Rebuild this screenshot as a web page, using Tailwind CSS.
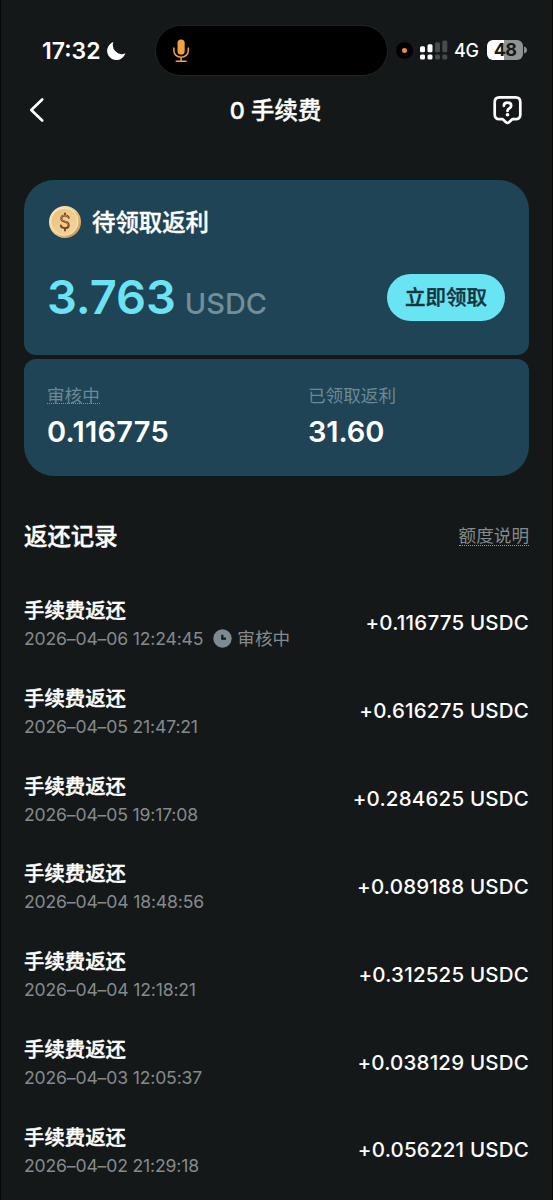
<!DOCTYPE html>
<html lang="zh-CN">
<head>
<meta charset="utf-8">
<meta name="viewport" content="width=device-width, initial-scale=1">
<title>0 手续费</title>
<script src="https://cdn.jsdelivr.net/npm/@tailwindcss/browser@4"></script>
</head>
<body class="bg-[#141819]">
<div class="w-[553px] h-[1200px] overflow-hidden bg-[#141819] border-x border-black/70 text-white font-['Inter','Noto_Sans_CJK_SC',sans-serif]">

  <!-- status bar -->
  <div class="h-[88px] pt-[25px] flex items-start">
    <div class="w-[154px] h-[52px] pl-[41px] flex items-center">
      <span class="text-[23px] leading-[50px] font-semibold w-[60px] whitespace-nowrap">17:32</span>
      <svg class="ml-[4px]" width="20" height="20" viewBox="0 0 20 20"><path d="M7.4 1A9.3 9.3 0 1 0 19.4 12.3A9 9 0 0 1 7.4 1Z" fill="#fff"/></svg>
    </div>
    <div class="w-[233px] h-[51px] rounded-full bg-black border border-[#202425] pl-[16px] flex items-center">
      <svg width="18" height="26" viewBox="0 0 18 26" fill="none" stroke="#f0a23c" stroke-width="1.5" stroke-linecap="round"><rect x="5.5" y="1.5" width="7.2" height="15" rx="3.6" fill="#f0a23c" stroke="none"/><path d="M1.9 10v2.8a7.2 6.4 0 0 0 14.4 0v-2.8M9.1 19.2v4M4.2 23.2h9.8"/></svg>
    </div>
    <div class="h-[50px] flex items-center ml-[8px]">
      <span class="size-[17px] rounded-full bg-black flex items-center justify-center"><span class="size-[5px] rounded-full bg-[#ef8a3a]"></span></span>
      <svg class="ml-[7px]" width="28" height="20" viewBox="0 0 28 20"><g fill="#fff"><rect x="0" y="6.3" width="5" height="6" rx="1.5"/><rect x="0" y="14.6" width="5" height="5" rx="1.5"/><rect x="7.5" y="4.3" width="5" height="8" rx="1.5"/><rect x="7.5" y="14.6" width="5" height="5" rx="1.5"/></g><g fill="#474b4c"><rect x="15" y="2.3" width="5" height="10" rx="1.5"/><rect x="15" y="14.6" width="5" height="5" rx="1.5"/><rect x="22.3" y="0.6" width="5" height="11.7" rx="1.5"/><rect x="22.3" y="14.6" width="5" height="5" rx="1.5"/></g></svg>
      <span class="ml-[6px] mt-[2px] w-[25px] text-[18px] leading-[50px] font-medium tracking-[-0.4px] whitespace-nowrap">4G</span>
      <span class="ml-[8px] w-[36px] h-[20px] rounded-[6px] bg-linear-to-r from-white from-48% to-[#909394] to-48% text-[#15191a] text-[18px] leading-[20px] font-bold tracking-[-0.6px] text-center">48</span>
      <svg class="ml-[1px]" width="3" height="8" viewBox="0 0 3 8"><path d="M0 0.5Q3 1.5 3 4T0 7.5Z" fill="#8b8e8f"/></svg>
    </div>
  </div>

  <!-- navigation -->
  <div class="h-[44px] pl-[28px] pr-[30px] flex items-center justify-between">
    <svg width="29" height="26" viewBox="0 0 29 26" fill="none" stroke="#fff" stroke-width="2.7" stroke-linecap="round" stroke-linejoin="round"><path d="M13.2 2.5L2.3 13L13.2 23.5"/></svg>
    <h1 class="pt-[1px] text-[23.3px] leading-[44px] font-medium tracking-[0.1px] [-webkit-text-stroke:0.4px]">0 手续费</h1>
    <svg width="29" height="30" viewBox="0 0 29 30" fill="none" stroke="#fff" stroke-width="2.7" stroke-linecap="round" stroke-linejoin="round"><path d="M6.5 2.3H22.5Q27.3 2.3 27.3 7V19.5Q27.3 24.2 22.5 24.2H19.3L16 27.3Q14.5 28.6 13 27.3L9.7 24.2H6.5Q1.7 24.2 1.7 19.5V7Q1.7 2.3 6.5 2.3Z"/><path d="M10.8 10.8Q10.9 7.7 14.5 7.7Q18.2 7.7 18.2 10.8Q18.2 12.3 16.3 13.4Q14.5 14.4 14.5 15.9"/><circle cx="14.5" cy="19.8" r="1.8" fill="#fff" stroke="none"/></svg>
  </div>

  <!-- rebate summary -->
  <div class="mx-[23px] mt-[48px] flex flex-col gap-[4px]">
    <section class="h-[175px] rounded-t-[30px] rounded-b-[12px] bg-[#1f4455] pl-[23px] pr-[24px] pt-[24px]">
      <div class="h-[36px] flex items-center gap-[10px] pl-[1px]">
        <svg width="34" height="34" viewBox="0 0 34 34"><defs><linearGradient id="rim" x1="0" y1="0" x2="1" y2="1"><stop stop-color="#fff0cf"/><stop offset=".5" stop-color="#efc98a"/><stop offset="1" stop-color="#c58c49"/></linearGradient><linearGradient id="face" x1="0" y1="0" x2="1" y2="1"><stop stop-color="#e9c07e"/><stop offset="1" stop-color="#f6d79c"/></linearGradient></defs><circle cx="17" cy="17" r="16" fill="url(#rim)"/><circle cx="16.4" cy="16.8" r="13.6" fill="url(#face)" stroke="#fff0d0" stroke-width=".7"/><g fill="none" stroke-linecap="round"><path d="M20.8 12.8Q20.1 10.6 16.8 10.6Q13.3 10.6 13.3 13.5Q13.3 16 17 16.7Q20.7 17.4 20.7 20.2Q20.7 23.1 17 23.1Q13.3 23.1 12.8 20.6M17 8.6V10.5M17 23.2V25.6" stroke="#794522" stroke-width="2"/><path d="M20.3 12.2Q19.3 10.2 16.5 10.2Q13 10.4 13 13.2Q13 15.4 16.7 16.2Q20 17 20 19.8" stroke="#c48748" stroke-width=".9"/></g></svg>
        <h2 class="pt-[2px] text-[23.4px] leading-[36px] font-medium [-webkit-text-stroke:0.4px]">待领取返利</h2>
      </div>
      <div class="mt-[34px] h-[47px] flex items-center justify-between">
        <div class="pt-[6px] flex items-baseline leading-[48px]"><span class="text-[47px] font-semibold tracking-[-0.1px] text-[#6be3f2]">3.763</span><span class="ml-[9px] text-[29px] font-medium text-[#718e9a]">USDC</span></div>
        <button class="w-[118px] h-[47px] pt-[1px] rounded-full bg-[#69e4f3] text-[#12343f] text-[20.5px] font-medium [-webkit-text-stroke:0.4px]">立即领取</button>
      </div>
    </section>
    <section class="h-[117px] rounded-t-[12px] rounded-b-[30px] bg-[#1f4455] px-[23px] pt-[26px] grid grid-cols-[261px_1fr] content-start">
      <div>
        <div class="h-[22px] flex"><span class="h-[19px] text-[17.6px] leading-[22px] text-[#6b8996] border-b border-dotted border-[#7d98a3]">审核中</span></div>
        <div class="mt-[7px] text-[29px] leading-[36px] font-semibold tracking-[0.25px]">0.116775</div>
      </div>
      <div>
        <div class="h-[22px] text-[17.6px] leading-[22px] text-[#6b8996]">已领取返利</div>
        <div class="mt-[7px] text-[29px] leading-[36px] font-semibold tracking-[-0.1px]">31.60</div>
      </div>
    </section>
  </div>

  <!-- history heading -->
  <div class="mx-[23px] mt-[40px] h-[40px] flex items-center justify-between">
    <h2 class="pt-[1px] text-[23.4px] leading-[40px] font-medium [-webkit-text-stroke:0.4px]">返还记录</h2>
    <span class="h-[19px] text-[17.6px] leading-[18px] text-[#858b8d] border-b border-dotted border-[#959b9c]">额度说明</span>
  </div>

  <!-- history -->
  <ul id="records" class="mx-[23px] mt-[24px]"></ul>
</div>

<template id="record">
  <li class="h-[87.85px] flex items-center justify-between">
    <div class="pb-[1px]">
      <div class="pt-[1px] text-[20.4px] leading-[30px] font-medium [-webkit-text-stroke:0.4px]">手续费返还</div>
      <div class="h-[26px] flex items-center text-[17.6px] leading-[26px] text-[#858b8d]"><span data-date class="tracking-[-0.16px]"></span><span data-status class="hidden items-center ml-[10px]"><svg class="mr-[5px]" width="19" height="19" viewBox="0 0 19 19"><circle cx="9.5" cy="9.5" r="9.2" fill="#7c8b90"/><path d="M9.3 5.8V9.7H13" fill="none" stroke="#141819" stroke-width="2.2"/></svg>审核中</span></div>
    </div>
    <div data-amount class="pb-[1px] text-[20.5px] leading-[30px] font-medium tracking-[0.2px] whitespace-nowrap"></div>
  </li>
</template>
<script>
  const records = [
    ["2026–04–06 12:24:45", "+0.116775", true],
    ["2026–04–05 21:47:21", "+0.616275"],
    ["2026–04–05 19:17:08", "+0.284625"],
    ["2026–04–04 18:48:56", "+0.089188"],
    ["2026–04–04 12:18:21", "+0.312525"],
    ["2026–04–03 12:05:37", "+0.038129"],
    ["2026–04–02 21:29:18", "+0.056221"]
  ];
  const tpl = document.getElementById("record");
  for (const [date, amount, pending] of records) {
    const row = tpl.content.cloneNode(true);
    row.querySelector("[data-date]").textContent = date;
    row.querySelector("[data-amount]").textContent = amount + " USDC";
    if (pending) row.querySelector("[data-status]").classList.replace("hidden", "flex");
    document.getElementById("records").append(row);
  }
</script>
</body>
</html>
